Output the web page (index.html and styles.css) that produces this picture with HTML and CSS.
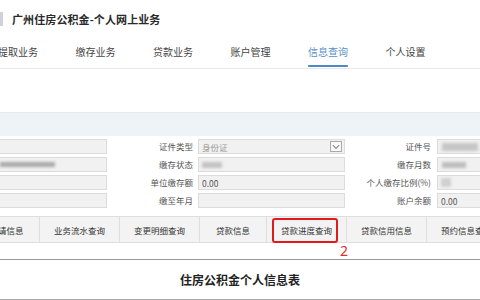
FILE: index.html
```html
<!DOCTYPE html>
<html lang="zh-CN">
<head>
<meta charset="utf-8">
<title>广州住房公积金-个人网上业务</title>
<link rel="stylesheet" href="styles.css">
</head>
<body>
<div class="page">
  <header class="header">
    <div class="brand">
      <span class="logo-mark"></span>
      <h1 class="title">广州住房公积金-个人网上业务</h1>
    </div>
    <nav class="nav">
      <a class="nav-item">提取业务</a>
      <a class="nav-item">缴存业务</a>
      <a class="nav-item">贷款业务</a>
      <a class="nav-item">账户管理</a>
      <a class="nav-item active">信息查询</a>
      <a class="nav-item">个人设置</a>
    </nav>
  </header>

  <div class="spacer"></div>
  <div class="band"></div>

  <section class="form">
    <div class="field field-left"></div>
    <label class="label">证件类型</label>
    <div class="field select"><span class="val muted">身份证</span><span class="arrow"><svg width="8" height="6" viewBox="0 0 8 6"><path d="M1 1.2 L4 4.5 L7 1.2" fill="none" stroke="#555" stroke-width="1"/></svg></span></div>
    <label class="label">证件号</label>
    <div class="field"><span class="blur b-wide"></span></div>

    <div class="field field-left"><span class="blur b-dark"></span></div>
    <label class="label">缴存状态</label>
    <div class="field"><span class="blur b-small"></span></div>
    <label class="label">缴存月数</label>
    <div class="field"><span class="blur b-mid"></span></div>

    <div class="field field-left"></div>
    <label class="label">单位缴存额</label>
    <div class="field"><span class="val">0.00</span></div>
    <label class="label">个人缴存比例(%)</label>
    <div class="field"><span class="blur b-tiny"></span></div>

    <div class="field field-left"></div>
    <label class="label">缴至年月</label>
    <div class="field"></div>
    <label class="label">账户余额</label>
    <div class="field"><span class="val">0.00</span></div>
  </section>

  <div class="buttons">
    <button class="btn w4">申请信息</button>
    <button class="btn w6">业务流水查询</button>
    <button class="btn w6">变更明细查询</button>
    <button class="btn w4">贷款信息</button>
    <button class="btn w6 marked">贷款进度查询<span class="red-box"></span><span class="step">2</span></button>
    <button class="btn w6">贷款信用信息</button>
    <button class="btn w6">预约信息查询</button>
  </div>

  <section class="sheet">
    <h2 class="sheet-title">住房公积金个人信息表</h2>
  </section>
</div>
</body>
</html>
```

FILE: styles.css
```css
* { box-sizing: border-box; margin: 0; padding: 0; }
html, body { width: 480px; height: 300px; overflow: hidden; background: #fff; }
body { font-family: "Noto Sans CJK SC", "Noto Sans", sans-serif; color: #333; }
.page { width: 480px; height: 300px; overflow: hidden; }

.header { height: 69px; border-bottom: 1px solid #e6e8eb; }
.brand { height: 38px; display: flex; align-items: center; }
.logo-mark { width: 3px; height: 14px; background: #cfd3d8; }
.title { font-size: 11px; font-weight: 700; color: #2a2a2a; margin-left: 9px; letter-spacing: 0.1px; line-height: 1; }

.nav { display: flex; gap: 37.5px; margin-left: -2px; height: 30px; }
.nav-item { width: 40px; font-size: 10px; line-height: 1; color: #444; padding-top: 9px; white-space: nowrap; position: relative; }
.nav-item.active { color: #5a8fc6; }
.nav-item.active::after { content: ""; position: absolute; left: 0; right: 0; top: 27px; height: 2px; background: #4d88c8; border-radius: 1px; }

.spacer { height: 43px; }
.band { height: 24px; background: #eef3f8; border-top: 1px solid #e4e9ef; }

.form {
  margin-top: 3px;
  display: grid;
  grid-template-columns: 107px 86px 152px 86px 1fr;
  row-gap: 3px;
  grid-auto-rows: 15px;
  height: 73px;
}
.field { background: #f1f1f1; border: 1px solid #dcdcdc; position: relative; display: flex; align-items: center; font-size: 8.5px; color: #555; overflow: hidden; }
.field-left { border-left: none; }
.form .field:nth-child(5n+3) { margin-left: 5px; }
.form .field:nth-child(5n) { margin-left: 6px; border-right: none; }
.label { font-size: 8.5px; color: #555; text-align: right; line-height: 15px; white-space: nowrap; }
.val { padding-left: 3px; }
.muted { color: #999; }
.select .arrow { position: absolute; right: 2px; top: 1px; width: 12px; height: 11px; border: 1px solid #aaa; background: #f8f8f8; display: flex; align-items: center; justify-content: center; }
.blur { display: block; position: absolute; top: 4px; height: 6px; background: #b8b8b8; filter: blur(1.4px); }
.b-wide { left: 4px; width: 36px; height: 8px; top: 3px; background: #c6c6c6; }
.b-dark { left: 0; width: 55px; height: 5px; top: 4px; background: #a9a9a9; }
.b-small { left: 3px; width: 20px; background: #c2c2c2; }
.b-mid { left: 4px; width: 24px; background: #bdbdbd; }
.b-tiny { left: 3px; width: 10px; height: 9px; top: 2px; background: #d0d0d0; }

.buttons { display: flex; margin-top: 4px; margin-left: -27px; height: 27px; }
.btn { flex: none; height: 27px; background: #f3f3f3; border: 1px solid #dedede; border-left: none; font-family: "Noto Sans CJK SC", sans-serif; font-size: 8.5px; color: #333; position: relative; cursor: default; }
.btn.w4 { width: 67px; }
.btn.w6 { width: 80px; }
.btn:first-child { border-left: 1px solid #dedede; }
.red-box { position: absolute; left: 5px; top: 1px; width: 66px; height: 25px; border: 2.5px solid #e01b1e; border-radius: 3px; }
.step { position: absolute; left: 73px; top: 27px; font-size: 14px; line-height: 14px; color: #e0302c; font-family: "Noto Sans", sans-serif; }

.sheet { margin-top: 16px; border-top: 1.5px solid #9a9a9a; height: 42px; border-bottom: 2px solid #a8a8a8; display: flex; align-items: center; justify-content: center; }
.sheet-title { font-size: 12px; font-weight: 700; color: #222; line-height: 1; }
```
